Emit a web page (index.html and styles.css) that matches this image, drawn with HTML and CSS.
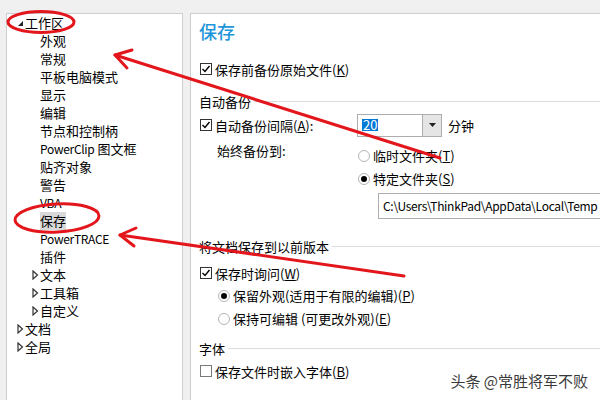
FILE: index.html
```html
<!DOCTYPE html>
<html lang="zh-CN">
<head>
  <meta charset="UTF-8" />
  <title>选项 - 保存</title>
  <link rel="stylesheet" href="styles.css">
</head>
<body>
  <div class="window">
    <div class="tree">
      <div class="node"><span class="twisty"><svg width="8" height="8" viewBox="0 0 8 8"><polygon points="6,2 6,7 1,7" fill="#222"/></svg></span><span>工作区</span></div>
      <div class="node lvl2"><span class="twisty"></span><span>外观</span></div>
      <div class="node lvl2"><span class="twisty"></span><span>常规</span></div>
      <div class="node lvl2"><span class="twisty"></span><span>平板电脑模式</span></div>
      <div class="node lvl2"><span class="twisty"></span><span>显示</span></div>
      <div class="node lvl2"><span class="twisty"></span><span>编辑</span></div>
      <div class="node lvl2"><span class="twisty"></span><span>节点和控制柄</span></div>
      <div class="node lvl2"><span class="twisty"></span><span><span class="lat">PowerClip</span> 图文框</span></div>
      <div class="node lvl2"><span class="twisty"></span><span>贴齐对象</span></div>
      <div class="node lvl2"><span class="twisty"></span><span>警告</span></div>
      <div class="node lvl2"><span class="twisty"></span><span class="lat">VBA</span></div>
      <div class="node lvl2"><span class="twisty"></span><span class="selected">保存</span></div>
      <div class="node lvl2"><span class="twisty"></span><span class="lat">PowerTRACE</span></div>
      <div class="node lvl2"><span class="twisty"></span><span>插件</span></div>
      <div class="node lvl2"><span class="twisty"><svg width="8" height="10" viewBox="0 0 8 10"><polygon points="1,1 5.5,5 1,9" fill="#fff" stroke="#333" stroke-width="1.2"/></svg></span><span>文本</span></div>
      <div class="node lvl2"><span class="twisty"><svg width="8" height="10" viewBox="0 0 8 10"><polygon points="1,1 5.5,5 1,9" fill="#fff" stroke="#333" stroke-width="1.2"/></svg></span><span>工具箱</span></div>
      <div class="node lvl2"><span class="twisty"><svg width="8" height="10" viewBox="0 0 8 10"><polygon points="1,1 5.5,5 1,9" fill="#fff" stroke="#333" stroke-width="1.2"/></svg></span><span>自定义</span></div>
      <div class="node"><span class="twisty"><svg width="8" height="10" viewBox="0 0 8 10"><polygon points="1,1 5.5,5 1,9" fill="#fff" stroke="#333" stroke-width="1.2"/></svg></span><span>文档</span></div>
      <div class="node"><span class="twisty"><svg width="8" height="10" viewBox="0 0 8 10"><polygon points="1,1 5.5,5 1,9" fill="#fff" stroke="#333" stroke-width="1.2"/></svg></span><span>全局</span></div>
    </div>

    <div class="pane">
      <div class="title">保存</div>

      <div class="row first">
        <span class="check on"><svg width="10" height="10" viewBox="0 0 10 10"><path d="M1.5 5 L4 7.5 L8.5 2" fill="none" stroke="#000" stroke-width="1.4"/></svg></span>
        <span>保存前备份原始文件(<u>K</u>)</span>
      </div>

      <div class="group g-auto"><span>自动备份</span><span class="rule"></span></div>

      <div class="row interval">
        <div class="check-label">
          <span class="check on"><svg width="10" height="10" viewBox="0 0 10 10"><path d="M1.5 5 L4 7.5 L8.5 2" fill="none" stroke="#000" stroke-width="1.4"/></svg></span>
          <span>自动备份间隔(<u>A</u>):</span>
        </div>
        <div class="combo">
          <div class="combo-input"><span class="sel">20</span></div>
          <div class="combo-btn"><svg width="7" height="4" viewBox="0 0 7 4"><polygon points="0,0 7,0 3.5,4" fill="#222"/></svg></div>
        </div>
        <span class="unit">分钟</span>
      </div>

      <div class="dest">
        <div class="dest-label">始终备份到:</div>
        <div class="dest-options">
          <div class="opt"><span class="radio"></span><span>临时文件夹(<u>T</u>)</span></div>
          <div class="opt"><span class="radio on"></span><span>特定文件夹(<u>S</u>)</span></div>
          <div class="path">C:\Users\ThinkPad\AppData\Local\Temp</div>
        </div>
      </div>

      <div class="group g-prev"><span>将文档保存到以前版本</span><span class="rule"></span></div>

      <div class="row ask">
        <span class="check on"><svg width="10" height="10" viewBox="0 0 10 10"><path d="M1.5 5 L4 7.5 L8.5 2" fill="none" stroke="#000" stroke-width="1.4"/></svg></span>
        <span>保存时询问(<u>W</u>)</span>
      </div>
      <div class="opt sub keep"><span class="radio on"></span><span>保留外观(适用于有限的编辑)(<u>P</u>)</span></div>
      <div class="opt sub"><span class="radio"></span><span>保持可编辑 (可更改外观)(<u>E</u>)</span></div>

      <div class="group g-font"><span>字体</span><span class="rule"></span></div>

      <div class="row embed">
        <span class="check"></span>
        <span>保存文件时嵌入字体(<u>B</u>)</span>
      </div>
    </div>
  </div>

  <svg class="marks" width="600" height="400" viewBox="0 0 600 400">
    <g fill="none" stroke="#e3161c" stroke-width="3" stroke-linecap="round" stroke-linejoin="round">
      <ellipse cx="41" cy="22" rx="33" ry="10.5"/>
      <line x1="440" y1="158" x2="115" y2="55"/>
      <polyline points="132,50 115,55 127,68"/>
      <ellipse cx="57" cy="218" rx="42" ry="14" transform="rotate(-3 57 218)"/>
      <line x1="404" y1="276" x2="120" y2="235"/>
      <polyline points="136,228 120,235 134,246"/>
    </g>
  </svg>

  <div class="watermark">头条 @常胜将军不败</div>
</body>
</html>
```

FILE: styles.css
```css
body {
  margin: 0;
  background: #f0f0f0;
  font-family: "Noto Sans CJK SC", "Noto Sans", sans-serif;
  font-size: 13px;
  color: #000;
  overflow: hidden;
}

.window {
  display: flex;
  gap: 7px;
  height: 400px;
  padding: 13px 0 0 6px;
  box-sizing: border-box;
  overflow: hidden;
}

/* tree on the left */
.tree {
  width: 177px;
  flex-shrink: 0;
  background: #fff;
  border: 1px solid #cdcdcd;
  border-bottom: none;
  box-sizing: border-box;
}

.node {
  display: flex;
  align-items: center;
  height: 18px;
  line-height: 18px;
  padding-left: 10px;
  white-space: nowrap;
}

.node.lvl2 {
  padding-left: 25px;
}

.twisty {
  width: 8px;
  height: 18px;
  display: flex;
  align-items: center;
  flex-shrink: 0;
}

.lat {
  font-size: 12px;
  letter-spacing: -0.3px;
}

.selected {
  background: #d9d9d9;
}

/* settings pane */
.pane {
  flex: 1;
  margin-right: -30px;
  background: #fff;
  border: 1px solid #cdcdcd;
  border-bottom: none;
  padding: 5px 0 0 8px;
  white-space: nowrap;
}

.title {
  font-size: 18px;
  font-weight: 500;
  line-height: 24px;
  color: #1f96dc;
}

.row {
  display: flex;
  align-items: center;
  height: 20px;
}

.row.first { margin-top: 16px; }
.row.interval { height: 24px; margin-top: 2px; }
.row.ask { margin-top: 7px; }
.row.embed { margin-top: 3px; }

u {
  text-decoration: underline;
  text-underline-offset: 1px;
}

.check {
  width: 12px;
  height: 12px;
  box-sizing: border-box;
  border: 1px solid #7a7a7a;
  margin: 0 3px 0 1px;
  display: inline-flex;
  align-items: center;
  justify-content: center;
  flex-shrink: 0;
}

.check.on {
  border-color: #333;
}

.group {
  display: flex;
  align-items: center;
  height: 20px;
}

.group .rule {
  flex: 1;
  border-top: 1px solid #dcdcdc;
  margin-left: 3px;
}

.g-auto { margin-top: 12px; }
.g-prev { margin-top: 17px; }
.g-font { margin-top: 8px; }

.check-label {
  display: flex;
  align-items: center;
  width: 158px;
}

.combo {
  display: flex;
  height: 23px;
  border: 1px solid #adadad;
  box-sizing: border-box;
}

.combo-input {
  width: 60px;
  padding-left: 4px;
  display: flex;
  align-items: center;
}

.sel {
  background: #0078d7;
  color: #fff;
  line-height: 12px;
  padding: 0 1px;
}

.combo-btn {
  width: 18px;
  background: #e5e5e5;
  border-left: 1px solid #adadad;
  display: flex;
  align-items: center;
  justify-content: center;
}

.unit {
  margin-left: 6px;
}

.dest {
  display: flex;
  margin-top: 4px;
}

.dest-label {
  width: 140px;
  margin-left: 18px;
  line-height: 20px;
}

.dest-options {
  padding-top: 3px;
}

.opt {
  display: flex;
  align-items: center;
  height: 23px;
}

.radio {
  width: 12px;
  height: 12px;
  box-sizing: border-box;
  border: 1px solid #b4b4b4;
  border-radius: 50%;
  margin: 0 3px 0 1px;
  display: inline-flex;
  align-items: center;
  justify-content: center;
  flex-shrink: 0;
}

.radio.on::after {
  content: "";
  width: 6px;
  height: 6px;
  border-radius: 50%;
  background: #000;
}

.path {
  margin: 3px 0 0 21px;
  height: 26px;
  line-height: 24px;
  border: 1px solid #adadad;
  box-sizing: border-box;
  padding: 0 4px;
  width: 250px;
  font-size: 12px;
  letter-spacing: -0.3px;
}

.opt.sub {
  margin-left: 18px;
}

.opt.keep {
  margin-top: 1px;
}

/* red annotations drawn over the dialog */
.marks {
  position: absolute;
  left: 0;
  top: 0;
  pointer-events: none;
}

.watermark {
  position: absolute;
  right: 12px;
  bottom: 9px;
  font-size: 15px;
  color: #3a3a3a;
  text-shadow: 0 0 2px #fff, 0 0 2px #fff;
}
```
